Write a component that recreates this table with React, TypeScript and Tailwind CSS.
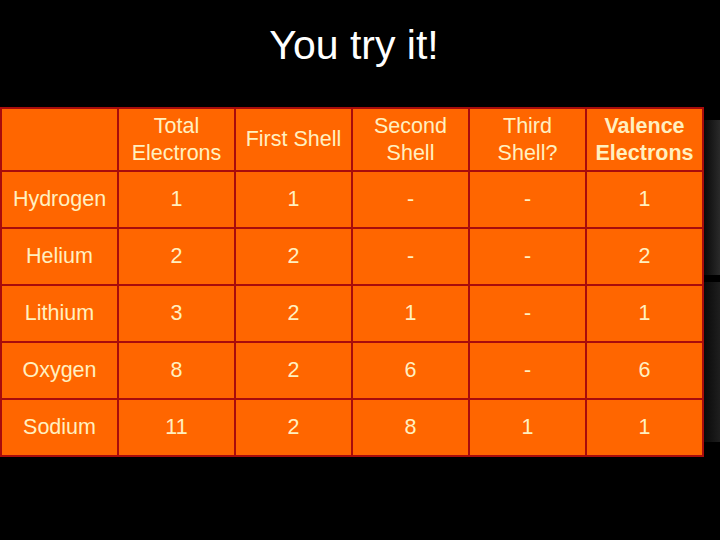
import React from "react";

const rows = [
  ["Hydrogen", "1", "1", "-", "-", "1"],
  ["Helium", "2", "2", "-", "-", "2"],
  ["Lithium", "3", "2", "1", "-", "1"],
  ["Oxygen", "8", "2", "6", "-", "6"],
  ["Sodium", "11", "2", "8", "1", "1"],
];

export default function App() {
  return (
    <div
      className="relative w-[720px] h-[540px] bg-black overflow-hidden"
      style={{ fontFamily: '"Liberation Sans", Arial, sans-serif' }}
    >
      <div className="absolute right-0 top-[120px] w-[16px] h-[155px] bg-gradient-to-r from-[#0a0a0a] to-[#2a2a2a]" />
      <div className="absolute right-0 top-[282px] w-[16px] h-[160px] bg-gradient-to-r from-[#0a0a0a] to-[#1e1e1e]" />
      <div className="h-[90px] pr-[12px] flex items-center justify-center text-white text-[41px] leading-none">
        You try it!
      </div>
      <div className="mt-[17px] relative">
        <table className="border-collapse table-fixed w-[702px] text-[#fff0c0] text-[21.5px] leading-[27px] text-center">
          <colgroup>
            <col className="w-[117px]" />
            <col className="w-[117px]" />
            <col className="w-[117px]" />
            <col className="w-[117px]" />
            <col className="w-[117px]" />
            <col className="w-[117px]" />
          </colgroup>
          <tbody>
            <tr className="h-[63px]">
              <td className="border-2 border-[#a80c0c] bg-[#ff6600]"></td>
              <td className="border-2 border-[#a80c0c] bg-[#ff6600]">Total<br />Electrons</td>
              <td className="border-2 border-[#a80c0c] bg-[#ff6600]">First Shell</td>
              <td className="border-2 border-[#a80c0c] bg-[#ff6600]">Second<br />Shell</td>
              <td className="border-2 border-[#a80c0c] bg-[#ff6600]">Third<br />Shell?</td>
              <td className="border-2 border-[#a80c0c] bg-[#ff6600] font-bold">Valence<br />Electrons</td>
            </tr>
            {rows.map((r) => (
              <tr key={r[0]} className="h-[57px]">
                {r.map((c, i) => (
                  <td key={i} className="border-2 border-[#a80c0c] bg-[#ff6600]">
                    {c}
                  </td>
                ))}
              </tr>
            ))}
          </tbody>
        </table>
      </div>
    </div>
  );
}
